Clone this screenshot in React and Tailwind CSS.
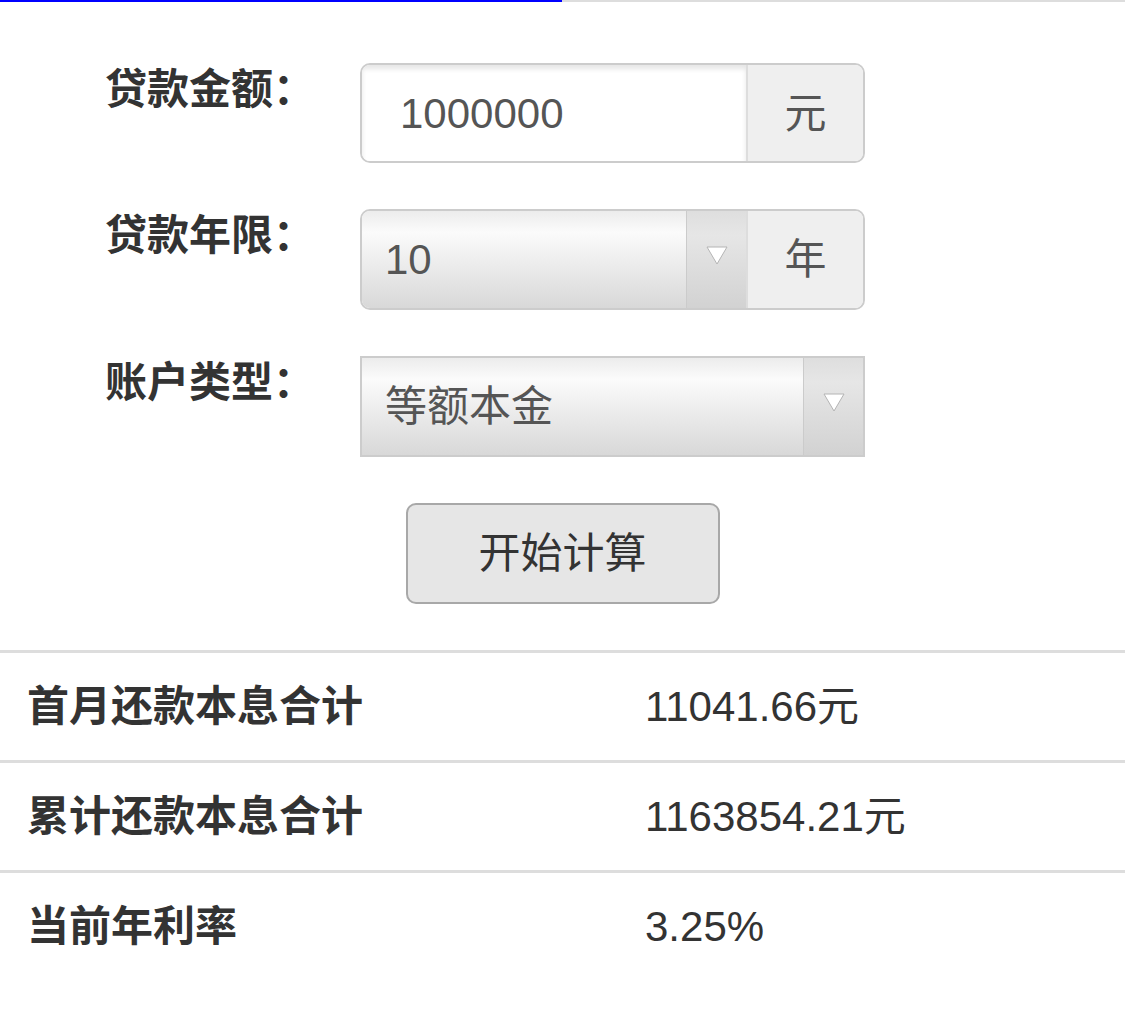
import { useState } from "react";

const ArrowDown = () => (
  <svg width="22" height="20" viewBox="0 0 22 20">
    <polygon points="1,2 21,2 11,19" fill="#ffffff" stroke="#b4b4b4" strokeWidth="1" />
  </svg>
);

const FormRow = ({ label, children }) => (
  <div className="flex pl-[105px]">
    <div className="w-[255px] text-[42px] leading-[54px] font-bold text-[#333]">{label}</div>
    {children}
  </div>
);

const ResultRow = ({ label, value }) => (
  <div className="flex items-center h-[110px] border-t-[3px] border-[#ddd]">
    <div className="w-[645px] pl-[27px] text-[42px] font-bold text-[#333]">{label}</div>
    <div className="text-[42px] text-[#333]">{value}</div>
  </div>
);

export default function App() {
  const [amount] = useState("1000000");

  return (
    <div className="min-h-[1022px] bg-white font-['Liberation_Sans','Noto_Sans_CJK_SC',sans-serif]">
      {/* progress bar */}
      <div className="flex h-[2px]">
        <div className="w-[562px] bg-[#0000ff]" />
        <div className="flex-1 bg-[#ddd]" />
      </div>

      <div className="flex flex-col gap-[46px] pt-[61px]">
        {/* 贷款金额 */}
        <FormRow label="贷款金额：">
          <div className="flex w-[505px] h-[100px] border-2 border-[#ccc] rounded-[10px] overflow-hidden">
            <div className="flex-1 flex items-center pl-[38px] bg-white shadow-[inset_0_4px_5px_rgba(0,0,0,0.10)] text-[42px] text-[#555]">
              {amount}
            </div>
            <div className="w-[117px] flex items-center justify-center bg-[#efefef] border-l-2 border-[#ddd] text-[42px] text-[#555]">
              元
            </div>
          </div>
        </FormRow>

        {/* 贷款年限 */}
        <FormRow label="贷款年限：">
          <div className="flex w-[505px] h-[101px] border-2 border-[#ccc] rounded-[10px] overflow-hidden">
            <div className="flex-1 flex items-center pl-[23px] bg-[linear-gradient(to_bottom,#ececec,#fbfbfb_22%,#d8d8d8)] text-[42px] text-[#555]">
              10
            </div>
            <div className="w-[60px] flex justify-center pt-[34px] bg-[linear-gradient(to_bottom,#dedede,#e6e6e6_25%,#d2d2d2)] border-l border-[#cbcbcb]">
              <ArrowDown />
            </div>
            <div className="w-[117px] flex items-center justify-center bg-[#efefef] border-l-2 border-[#ddd] text-[42px] text-[#555]">
              年
            </div>
          </div>
        </FormRow>

        {/* 账户类型 */}
        <FormRow label="账户类型：">
          <div className="flex w-[505px] h-[101px] border-2 border-[#ccc]">
            <div className="flex-1 flex items-center pl-[23px] bg-[linear-gradient(to_bottom,#ececec,#fbfbfb_22%,#d8d8d8)] text-[42px] text-[#555]">
              等额本金
            </div>
            <div className="w-[60px] flex justify-center pt-[34px] bg-[linear-gradient(to_bottom,#dedede,#e6e6e6_25%,#d2d2d2)] border-l border-[#cbcbcb]">
              <ArrowDown />
            </div>
          </div>
        </FormRow>

        {/* 开始计算 */}
        <div className="flex justify-center">
          <button className="w-[314px] h-[101px] bg-[#e6e6e6] border-2 border-[#a8a8a8] rounded-[10px] text-[42px] text-[#333]">
            开始计算
          </button>
        </div>

        {/* results */}
        <div>
          <ResultRow label="首月还款本息合计" value="11041.66元" />
          <ResultRow label="累计还款本息合计" value="1163854.21元" />
          <ResultRow label="当前年利率" value="3.25%" />
        </div>
      </div>
    </div>
  );
}
